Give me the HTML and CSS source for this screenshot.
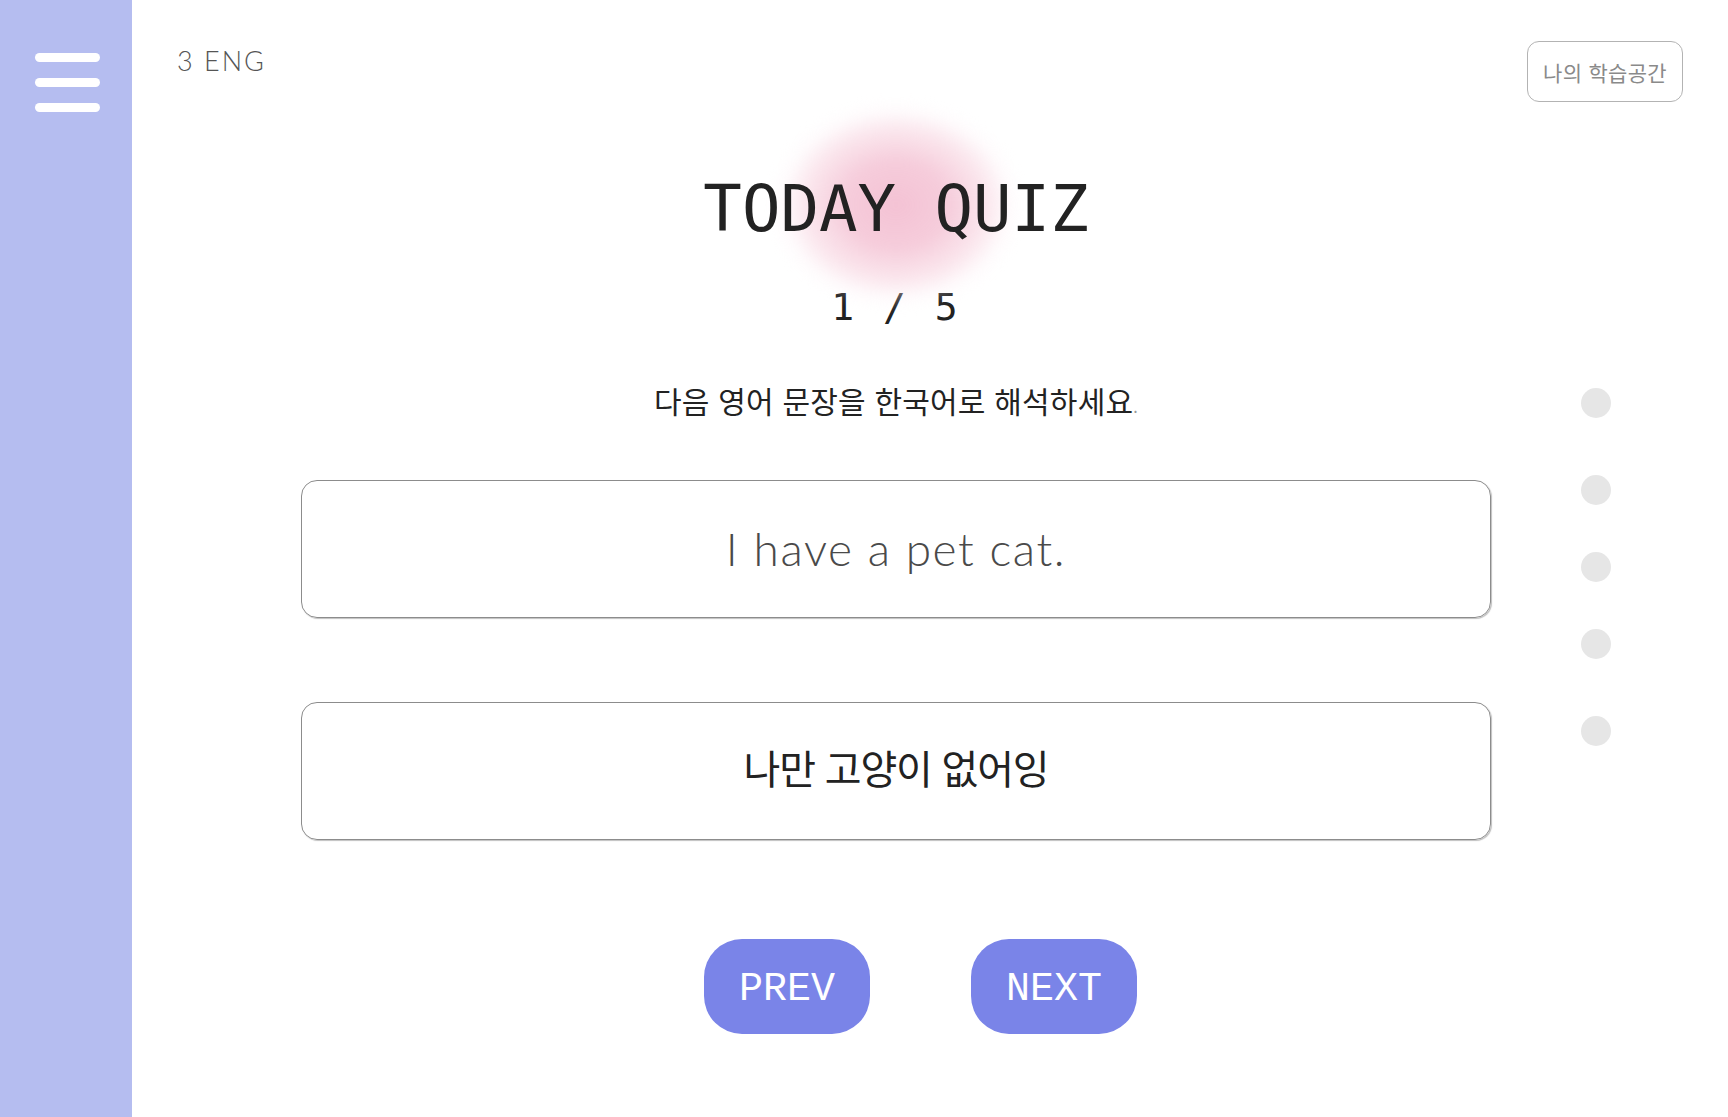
FILE: index.html
```html
<!DOCTYPE html>
<html lang="ko">
<head>
<meta charset="utf-8">
<title>Today Quiz</title>
<link rel="stylesheet" href="styles.css">
</head>
<body>
<aside class="sidebar">
  <div class="hamburger" aria-label="menu">
    <span class="bar"></span>
    <span class="bar"></span>
    <span class="bar"></span>
  </div>
</aside>
<main class="main">
  <header class="topbar">
    <div class="brand">3 ENG</div>
    <button class="my-space">나의 학습공간</button>
  </header>
  <div class="content">
    <section class="quiz">
      <h1 class="title"><span class="title-text">TODAY QUIZ</span></h1>
      <div class="count">1 / 5</div>
      <p class="instruction">다음 영어 문장을 한국어로 해석하세요<span class="dot-period">.</span></p>
      <div class="card card-question">I have a pet cat.</div>
      <div class="card card-answer">나만 고양이 없어잉</div>
      <div class="nav">
        <button class="nav-btn">PREV</button>
        <button class="nav-btn">NEXT</button>
      </div>
    </section>
    <nav class="progress">
      <span class="pdot"></span>
      <span class="pdot"></span>
      <span class="pdot"></span>
      <span class="pdot"></span>
      <span class="pdot"></span>
    </nav>
  </div>
</main>
</body>
</html>
```
FILE: styles.css
```css
* { box-sizing: border-box; }
html, body { margin: 0; padding: 0; }
body {
  display: flex;
  width: 1728px;
  height: 1117px;
  overflow: hidden;
  background: #ffffff;
  font-family: "Noto Sans CJK KR", "Noto Sans", sans-serif;
  color: #222;
}
.sidebar {
  width: 132px;
  flex: 0 0 132px;
  background: #b5bdf0;
}
.hamburger {
  display: flex;
  flex-direction: column;
  gap: 16px;
  padding: 53px 0 0 35px;
}
.bar {
  display: block;
  width: 65px;
  height: 9px;
  border-radius: 5px;
  background: #ffffff;
}
.main {
  flex: 1;
  display: flex;
  flex-direction: column;
}
.topbar {
  display: flex;
  justify-content: space-between;
  align-items: flex-start;
  padding: 41px 45px 0 45px;
  height: 102px;
}
.brand {
  font-family: "Lato", sans-serif;
  font-weight: 300;
  font-size: 27px;
  letter-spacing: 2px;
  color: #555;
  line-height: 1;
  margin-top: 6px;
}
.my-space {
  height: 61px;
  width: 156px;
  padding: 0;
  border: 1px solid #b3b3b3;
  border-radius: 12px;
  background: #fff;
  color: #8a8a8a;
  font-family: "Noto Sans CJK KR", sans-serif;
  font-size: 21px;
  letter-spacing: 0.3px;
}
.content {
  display: flex;
}
.quiz {
  flex: 1;
  padding-left: 94px;
  display: flex;
  flex-direction: column;
  align-items: center;
}
.title {
  position: relative;
  margin: 75px 0 0 0;
  font-family: "DejaVu Sans Mono", monospace;
  font-weight: normal;
  font-size: 64px;
  line-height: 64px;
  color: #222;
  letter-spacing: 0;
}
.title::before {
  content: "";
  position: absolute;
  left: 50%;
  top: 50%;
  width: 256px;
  height: 212px;
  transform: translate(-50%, -52%);
  border-radius: 50%;
  background: radial-gradient(ellipse closest-side at center, rgba(244, 194, 212, 1) 0%, rgba(245, 200, 216, 0.92) 40%, rgba(248, 215, 226, 0.62) 70%, rgba(252, 236, 242, 0.22) 88%, rgba(255, 255, 255, 0) 100%);
  filter: blur(4px);
  z-index: 0;
}
.title-text { position: relative; z-index: 1; }
.count {
  margin-top: 47px;
  font-family: "DejaVu Sans Mono", monospace;
  font-size: 38px;
  line-height: 38px;
  letter-spacing: 3px;
  color: #222;
}
.instruction {
  margin: 60px 0 0 0;
  font-size: 30px;
  line-height: 29px;
  letter-spacing: 0.2px;
  color: #222;
}
.dot-period { color: #999; font-size: 16px; }
.card {
  width: 1190px;
  height: 138px;
  border: 1px solid #8c8c8c;
  border-radius: 16px;
  box-shadow: 1px 1px 1px rgba(0, 0, 0, 0.25);
  display: flex;
  align-items: center;
  justify-content: center;
}
.card-question {
  margin-top: 59px;
  font-family: "Lato", sans-serif;
  font-weight: 300;
  font-size: 46px;
  letter-spacing: 1.6px;
  color: #4a4a4a;
  padding-bottom: 1px;
}
.card-answer {
  margin-top: 84px;
  font-size: 40px;
  letter-spacing: -1.2px;
  color: #222;
  padding-bottom: 8px;
}
.nav {
  display: flex;
  gap: 101px;
  margin-top: 99px;
  padding-left: 49px;
}
.nav-btn {
  width: 166px;
  height: 95px;
  border: none;
  border-radius: 38px;
  background: #7a84e8;
  color: #ffffff;
  font-family: "Liberation Mono", monospace;
  font-size: 40px;
  letter-spacing: 0;
  padding: 5px 0 0 0;
}
.progress {
  width: 60px;
  margin-right: 102px;
  padding-top: 286px;
  display: flex;
  flex-direction: column;
  align-items: center;
}
.pdot {
  display: block;
  width: 30px;
  height: 30px;
  border-radius: 50%;
  background: #e6e6e6;
}
.pdot:nth-child(2) { margin-top: 57px; }
.pdot:nth-child(3) { margin-top: 47px; }
.pdot:nth-child(4) { margin-top: 47px; }
.pdot:nth-child(5) { margin-top: 57px; }
```
